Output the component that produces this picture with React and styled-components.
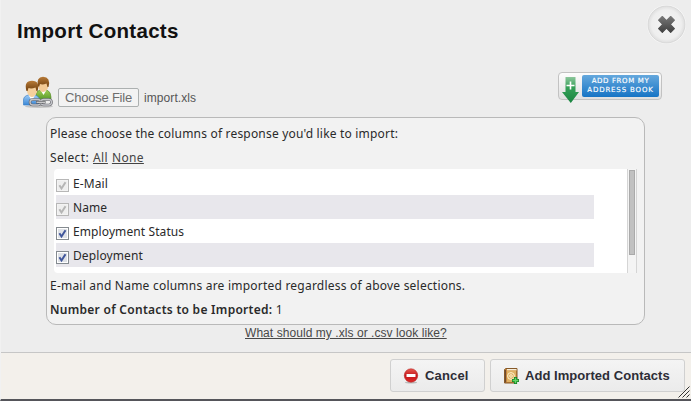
import React from "react";
import styled, { createGlobalStyle } from "styled-components";

const Global = createGlobalStyle`
  * { box-sizing: border-box; }
  body { margin: 0; background: #ededed; overflow: hidden; }
`;

const Dialog = styled.div`
  position: relative;
  display: flex;
  flex-direction: column;
  width: 691px;
  height: 401px;
  background: #ededed;
  border-left: 1px solid #f1f1f1;
  border-bottom: 2px solid #55555a;
  color: #2a2a2a;
  font-family: "Liberation Sans", Arial, sans-serif;
`;

const Header = styled.header`
  display: flex;
  justify-content: space-between;
  height: 76px;
  padding: 0 3px 0 16px;
`;

const Title = styled.h1`
  margin: 19px 0 0;
  font-size: 20.5px;
  line-height: 24px;
  color: #111;
  letter-spacing: 0.3px;
`;

const CloseButton = styled.button`
  width: 42px;
  height: 46px;
  margin-top: 2px;
  padding: 0;
  border: 0;
  background: none;
`;

const UploadRow = styled.div`
  display: flex;
  height: 41px;
  padding-left: 21px;
`;

const ContactsIcon = styled.svg`
  width: 34px;
  height: 34px;
  flex: none;
`;

const FileButton = styled.button`
  width: 81px;
  height: 19px;
  margin: 12px 0 0 2px;
  padding: 0;
  border: 1px solid #acb0b0;
  border-radius: 2px;
  background: #f3f3f3;
  color: #6d6d6d;
  font: 13px/17px "Liberation Sans", Arial, sans-serif;
  letter-spacing: -0.22px;
`;

const FileName = styled.span`
  margin: 13px 0 0 5px;
  color: #555;
  font-size: 12px;
  line-height: 18px;
  letter-spacing: 0.08px;
`;

const AddressBook = styled.button`
  display: flex;
  width: 104px;
  height: 28px;
  margin: -4px 29px 0 auto;
  padding: 2px 2px 3px;
  border: 1px solid #c2c2c2;
  border-radius: 4px;
  background: linear-gradient(#fdfdfd, #e0e0e0);
`;

const ArrowIcon = styled.svg`
  width: 21px;
  height: 31px;
  flex: none;
  overflow: visible;
`;

const BookLabel = styled.span`
  display: flex;
  flex-direction: column;
  align-items: center;
  width: 78px;
  height: 22px;
  padding-top: 2px;
  border-radius: 2px;
  background: linear-gradient(#65a8dd, #1674c5);
  color: #fff;
`;

const BookLine = styled.span`
  font: 7px/9px "DejaVu Sans", sans-serif;
  white-space: nowrap;
  -webkit-text-stroke: 0.15px #fff;
  letter-spacing: ${(p) => p.$track}px;
`;

const Panel = styled.section`
  width: 599px;
  height: 208px;
  margin-left: 45px;
  padding: 3px 7px 0 3px;
  border: 1px solid #b9b9b9;
  border-radius: 10px;
  background: #f2f2f2;
  font: 12px/24px "Noto Sans", "Trebuchet MS", sans-serif;
`;

const Line = styled.p`
  height: 24px;
  margin: 0;
  line-height: 26px;
  white-space: nowrap;
  letter-spacing: ${(p) => p.$track || 0}px;
`;

const Strong = styled.b`
  font-weight: 600;
`;

const SelectLine = styled(Line)`
  display: flex;
  gap: 4px;
`;

const SelectLink = styled.a`
  color: #444;
  text-decoration: underline;
`;

const ListBox = styled.div`
  display: flex;
  width: 583px;
  height: 104px;
  margin: 0 0 0 4px;
  border-radius: 4px 0 0 4px;
  background: #fff;
`;

const Rows = styled.div`
  width: 540px;
  padding: 2px 0 0 2px;
`;

const Row = styled.label`
  display: flex;
  height: 24px;
  background: ${(p) => (p.$shaded ? "#e8e7ec" : "#fff")};
  line-height: 25px;
  letter-spacing: 0.1px;
`;

const Check = styled.svg`
  width: 13px;
  height: 13px;
  margin: 8px 4px 0 0;
`;

const ScrollTrack = styled.div`
  width: 10px;
  height: 104px;
  margin-left: auto;
  padding: 1px 1px 0;
  border: solid #d5d5d5;
  border-width: 0 1px;
  background: #f4f4f4;
`;

const ScrollThumb = styled.div`
  width: 6px;
  height: 85px;
  border: 1px solid #aaa;
  background: #c1c1c1;
`;

const HelpLink = styled.a`
  display: block;
  width: 210px;
  margin: -1px 0 0 244px;
  color: #484848;
  font-size: 12px;
  line-height: 18px;
  letter-spacing: 0.06px;
  white-space: nowrap;
  text-decoration: underline;
`;

const Footer = styled.footer`
  display: flex;
  justify-content: flex-end;
  gap: 5px;
  height: 47px;
  margin-top: auto;
  padding: 6px 6px 0 0;
  border-top: 1px solid #c6c6c6;
  background: #f3f0eb;
`;

const ActionButton = styled.button`
  display: flex;
  align-items: center;
  width: ${(p) => p.$width}px;
  height: 33px;
  padding: 0 0 0 12px;
  border: 1px solid #d0d0d0;
  border-radius: 3px;
  background: linear-gradient(#f4f4f4, #ebebeb);
  color: #2d2d36;
  font: bold 13px/20px "Liberation Sans", Arial, sans-serif;
  letter-spacing: ${(p) => p.$track}px;
  white-space: nowrap;
`;

const ActionIcon = styled.svg`
  width: 16px;
  height: 16px;
  flex: none;
  margin: 1px 6px 0 0;
`;

const Grip = styled.svg`
  position: absolute;
  right: 0;
  bottom: 0;
  width: 14px;
  height: 14px;
`;

const columns = [
  { name: "E-Mail", locked: true },
  { name: "Name", locked: true },
  { name: "Employment Status" },
  { name: "Deployment" },
];

function CheckMark({ locked }) {
  return (
    <Check viewBox="0 0 13 13">
      <rect x=".5" y=".5" width="12" height="12" fill={locked ? "#f3f3f3" : "#fff"} stroke={locked ? "#b7b7b7" : "#858b90"} />
      <rect x="2" y="2" width="9" height="9" fill={locked ? "#eee" : "#dfe2e7"} />
      <path d="M3.4 6.2 5.5 9.5 9.5 3.2" fill="none" stroke={locked ? "#b5b5b5" : "#40569b"} strokeWidth="2" />
    </Check>
  );
}

function People() {
  return (
    <ContactsIcon viewBox="0 0 34 34">
      <defs>
        <linearGradient id="blue" x2="0" y2="1"><stop stopColor="#9fcbf5" /><stop offset="1" stopColor="#3987d7" /></linearGradient>
        <linearGradient id="green" x2="0" y2="1"><stop stopColor="#9fce50" /><stop offset="1" stopColor="#4c9025" /></linearGradient>
        <linearGradient id="hair" x2="0" y2="1"><stop stopColor="#b77a37" /><stop offset="1" stopColor="#70400f" /></linearGradient>
      </defs>
      <ellipse cx="17" cy="30.5" rx="14" ry="1.5" fill="#aaa" opacity=".6" />
      <path d="M14 25v-6q0-4 4-5h7q4 2 4 7v2z" fill="url(#green)" stroke="#568a29" strokeWidth=".6" />
      <path d="m18.500 14 3 5 3-5z" fill="#fff" />
      <path d="M16.500 8v4q2 4 4.500 4t5-4V8l-4-3z" fill="#f3ca95" />
      <path d="M16 10Q14 1 21 .8 29 1 26.500 11h-1l-1-3.500q-4 1.500-6.500 .5l-1 3z" fill="url(#hair)" />
      <path d="M1.500 29v-5q0-4 5-5h7q4.500 2 4.500 7v3z" fill="url(#blue)" stroke="#3e83c8" strokeWidth=".7" />
      <path d="m6.500 19 3.500 6 3-6z" fill="#fff" />
      <path d="M5 12v4q2 5 5 5t5-5v-4l-5-3z" fill="#f6d09d" />
      <path d="M4.500 15Q1.500 5 10 4.800 18.500 5 15.500 15h-1l-1-3.500q-4 1.500-7 .5l-1 3z" fill="url(#hair)" />
      <g fill="none">
        <rect x="8" y="23.500" width="10.500" height="5.500" rx="2.750" stroke="#66676c" strokeWidth="2.600" />
        <rect x="19" y="23.500" width="10.500" height="5.500" rx="2.750" stroke="#66676c" strokeWidth="2.600" />
        <rect x="8" y="23.500" width="10.500" height="5.500" rx="2.750" stroke="#c4c5ca" strokeWidth="1.300" />
        <rect x="19" y="23.500" width="10.500" height="5.500" rx="2.750" stroke="#c4c5ca" strokeWidth="1.300" />
        <path d="M14 26.250h9.500" stroke="#55565b" strokeWidth="2.600" />
        <path d="M14.500 26.250h8.500" stroke="#ddd" strokeWidth="1.200" />
      </g>
    </ContactsIcon>
  );
}

export default function App() {
  return (
    <Dialog>
      <Global />
      <Header>
        <Title>Import Contacts</Title>
        <CloseButton aria-label="Close">
          <svg width="42" height="46" viewBox="0 0 42 46">
            <defs>
              <radialGradient id="disc"><stop stopColor="#f5f5f5" /><stop offset=".8" stopColor="#eee" /><stop offset="1" stopColor="#dedede" /></radialGradient>
              <linearGradient id="cross" x2="0" y2="1"><stop stopColor="#777" /><stop offset="1" stopColor="#404040" /></linearGradient>
            </defs>
            <circle cx="20.5" cy="22.5" r="19.5" fill="#f8f8f8" />
            <circle cx="20.5" cy="22.5" r="18.5" fill="url(#disc)" stroke="#d3d3d3" strokeWidth=".8" />
            <path transform="translate(20.5 22.4) scale(.93) translate(-20.7 -22.3)" d="m12.2 17.8 4-4 4.5 4.4 4.5-4.4 4 4-4.4 4.5 4.4 4.5-4 4-4.5-4.4-4.5 4.4-4-4 4.4-4.5z" fill="url(#cross)" stroke="url(#cross)" strokeWidth="1.2" strokeLinejoin="round" />
          </svg>
        </CloseButton>
      </Header>
      <UploadRow>
        <People />
        <FileButton>Choose File</FileButton>
        <FileName>import.xls</FileName>
        <AddressBook>
          <ArrowIcon viewBox="0 0 21 31">
            <defs><linearGradient id="arrow" x2="0" y2="1"><stop stopColor="#8cc69b" /><stop offset=".4" stopColor="#35a058" /><stop offset="1" stopColor="#198440" /></linearGradient></defs>
            <path d="M4.5 2h10v15H18L9.8 28 1 17h3.5z" fill="url(#arrow)" />
            <path d="M5.500 10.5h8M9.5 6.5v8" stroke="#fff" strokeWidth="1.6" />
          </ArrowIcon>
          <BookLabel>
            <BookLine $track={0.62}>ADD FROM MY</BookLine>
            <BookLine $track={0.85}>ADDRESS BOOK</BookLine>
          </BookLabel>
        </AddressBook>
      </UploadRow>
      <Panel>
        <Line $track={0.19}>Please choose the columns of response you'd like to import:</Line>
        <SelectLine $track={0.35}>
          <span>Select:</span>
          <SelectLink>All</SelectLink>
          <SelectLink>None</SelectLink>
        </SelectLine>
        <ListBox>
          <Rows>
            {columns.map((c, i) => (
              <Row key={c.name} $shaded={i % 2 === 1}>
                <CheckMark locked={c.locked} />
                {c.name}
              </Row>
            ))}
          </Rows>
          <ScrollTrack><ScrollThumb /></ScrollTrack>
        </ListBox>
        <Line $track={0.22}>E-mail and Name columns are imported regardless of above selections.</Line>
        <Line $track={0.28}><Strong>Number of Contacts to be Imported:</Strong> 1</Line>
      </Panel>
      <HelpLink>What should my .xls or .csv look like?</HelpLink>
      <Footer>
        <ActionButton $width={95} $track={0.15}>
          <ActionIcon viewBox="0 0 16 16">
            <defs><linearGradient id="stop" x2="0" y2="1"><stop stopColor="#e95b51" /><stop offset=".5" stopColor="#c4171b" /><stop offset="1" stopColor="#df2929" /></linearGradient></defs>
            <ellipse cx="8" cy="14.5" rx="6" ry="1" fill="#bbb" />
            <circle cx="8" cy="7.5" r="6.7" fill="url(#stop)" stroke="#b72525" strokeWidth=".6" />
            <rect x="3.5" y="6" width="9" height="3" rx=".5" fill="#fff" />
          </ActionIcon>
          Cancel
        </ActionButton>
        <ActionButton $width={195} $track={0.05}>
          <ActionIcon viewBox="0 0 16 16">
            <path d="M1.5 1.5 3 .5h11v13l-1 1.5H1.5z" fill="#c7873d" stroke="#865928" />
            <path d="M4 1h9.5v1.5H4z" fill="#f6edda" />
            <path d="M4 2.5h9V14H4z" fill="#deb064" />
            <path d="M2.5 2v12.5" stroke="#6d4a31" />
            <circle cx="8" cy="8" r="3.4" fill="none" stroke="#fff2cd" />
            <circle cx="8" cy="8" r="1.3" fill="none" stroke="#fff2cd" />
            <path d="M12.5 9v7M9 12.5h7" stroke="#168323" strokeWidth="3.2" />
            <path d="M12.5 9.7v5.6M9.7 12.5h5.6" stroke="#65d668" strokeWidth="1.4" />
          </ActionIcon>
          Add Imported Contacts
        </ActionButton>
      </Footer>
      <Grip viewBox="0 0 14 14">
        <path d="M1.500 12.500 12.500 1.500M5.500 12.500l7-7M9.500 12.500l3-3" stroke="#333" strokeWidth="1" />
      </Grip>
    </Dialog>
  );
}
